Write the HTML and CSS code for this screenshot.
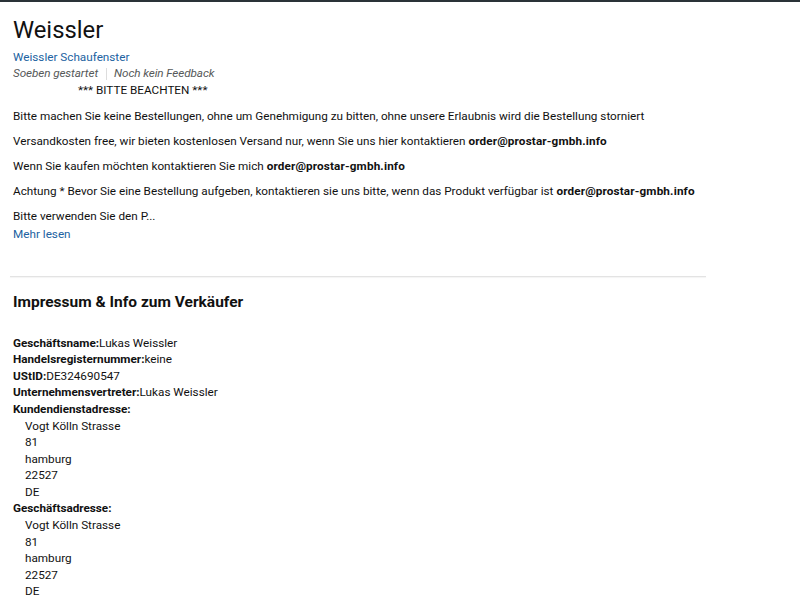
FILE: index.html
```html
<!DOCTYPE html>
<html lang="de">
<head>
<meta charset="utf-8">
<title>Weissler</title>
<link rel="stylesheet" href="styles.css">
</head>
<body>
<div class="page">
  <h1 class="seller-name">Weissler</h1>
  <a class="storefront" href="#">Weissler Schaufenster</a>
  <div class="feedback">
    <span>Soeben gestartet</span><span class="sep"></span><span>Noch kein Feedback</span>
  </div>
  <div class="description">
    <p class="notice">*** BITTE BEACHTEN ***</p>
    <p>Bitte machen Sie keine Bestellungen, ohne um Genehmigung zu bitten, ohne unsere Erlaubnis wird die Bestellung storniert</p>
    <p>Versandkosten free, wir bieten kostenlosen Versand nur, wenn Sie uns hier kontaktieren <b>order@prostar-gmbh.info</b></p>
    <p>Wenn Sie kaufen möchten kontaktieren Sie mich <b>order@prostar-gmbh.info</b></p>
    <p>Achtung * Bevor Sie eine Bestellung aufgeben, kontaktieren sie uns bitte, wenn das Produkt verfügbar ist <b>order@prostar-gmbh.info</b></p>
    <p class="truncated">Bitte verwenden Sie den P...</p>
    <a class="more" href="#">Mehr lesen</a>
  </div>
  <hr class="divider">
  <h3 class="section-title">Impressum &amp; Info zum Verkäufer</h3>
  <div class="info">
    <div><b>Geschäftsname:</b>Lukas Weissler</div>
    <div><b>Handelsregisternummer:</b>keine</div>
    <div><b>UStID:</b>DE324690547</div>
    <div><b>Unternehmensvertreter:</b>Lukas Weissler</div>
    <div><b>Kundendienstadresse:</b></div>
    <div class="addr">Vogt Kölln Strasse</div>
    <div class="addr">81</div>
    <div class="addr">hamburg</div>
    <div class="addr">22527</div>
    <div class="addr">DE</div>
    <div><b>Geschäftsadresse:</b></div>
    <div class="addr">Vogt Kölln Strasse</div>
    <div class="addr">81</div>
    <div class="addr">hamburg</div>
    <div class="addr">22527</div>
    <div class="addr">DE</div>
  </div>
</div>
</body>
</html>
```
FILE: styles.css
```css
html, body {
  margin: 0;
  padding: 0;
  background: #ffffff;
}
body {
  border-top: 2px solid #2a3338;
  font-family: Roboto, "Liberation Sans", sans-serif;
  font-size: 11.72px;
  line-height: 16.6px;
  color: #111111;
}
.page {
  padding: 11.5px 13px 0;
}
.seller-name {
  margin: 0;
  font-size: 23.8px;
  line-height: 32px;
  font-weight: 400;
  color: #111111;
}
.storefront {
  display: block;
  margin-top: 3.2px;
  color: #2162a1;
  text-decoration: none;
}
.feedback {
  display: flex;
  align-items: center;
  font-style: italic;
  color: #565959;
  letter-spacing: -0.1px;
}
.sep {
  display: inline-block;
  width: 1px;
  height: 12px;
  background: #dddddd;
  margin: 0 7px 0 8px;
}
.description p {
  margin: 0 0 8.4px;
  white-space: nowrap;
}
.description .notice {
  margin: 0 0 9.2px 65px;
}
.description .truncated {
  margin-bottom: 1.4px;
}
.description b {
  font-weight: 700;
  letter-spacing: 0.15px;
}
.more {
  display: block;
  color: #2162a1;
  text-decoration: none;
}
.divider {
  margin: 33.7px 81px 0 -3px;
  height: 0;
  border: 0;
  border-top: 1px solid #e3e3e3;
  box-shadow: 0 1px 1px rgba(0, 0, 0, 0.05);
}
.section-title {
  margin: 15px 0 0;
  font-size: 15.5px;
  line-height: 20px;
  font-weight: 700;
  color: #111111;
}
.info {
  margin-top: 22.7px;
}
.info b {
  font-weight: 700;
}
.info .addr {
  padding-left: 12px;
}
```
